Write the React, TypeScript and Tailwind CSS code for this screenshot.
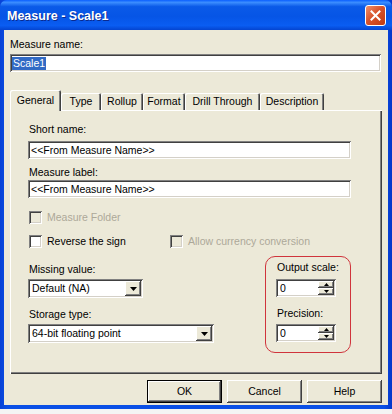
import React from "react";

const sunken =
  "bg-white shadow-[inset_1px_1px_0_#808080,inset_-1px_-1px_0_#ffffff,inset_2px_2px_0_#404040,inset_-2px_-2px_0_#d4d0c8]";
const raised =
  "bg-[#ece9d8] shadow-[inset_-1px_-1px_0_#404040,inset_1px_1px_0_#ffffff,inset_-2px_-2px_0_#808080,inset_2px_2px_0_#ece9d8]";

function DownArrow() {
  return (
    <svg width="7" height="4" viewBox="0 0 7 4">
      <path d="M0 0H7L3.5 4Z" fill="#000" />
    </svg>
  );
}

function Select({ value, w }: { value: string; w: string }) {
  return (
    <div className={`${sunken} ${w} h-[19px] flex items-center pl-[4px] pr-[2px]`}>
      <span className="flex-1 leading-[13px]">{value}</span>
      <div className={`${raised} w-[16px] h-[15px] flex items-center justify-center`}>
        <DownArrow />
      </div>
    </div>
  );
}

function Spin({ value }: { value: string }) {
  return (
    <div className={`${sunken} w-[60px] h-[18px] flex items-center pl-[4px] pr-[2px]`}>
      <span className="flex-1 leading-[13px]">{value}</span>
      <div className="flex flex-col h-[14px] w-[16px]">
        <div className={`${raised} h-[7px] flex items-center justify-center`}>
          <svg width="5" height="3" viewBox="0 0 5 3">
            <path d="M2.5 0L5 3H0Z" fill="#000" />
          </svg>
        </div>
        <div className={`${raised} h-[7px] flex items-center justify-center`}>
          <svg width="5" height="3" viewBox="0 0 5 3">
            <path d="M0 0H5L2.5 3Z" fill="#000" />
          </svg>
        </div>
      </div>
    </div>
  );
}

function Check({ label, disabled, className = "" }: { label: string; disabled?: boolean; className?: string }) {
  return (
    <div className={`flex items-center ${className}`}>
      <div
        className={`w-[13px] h-[13px] ${
          disabled ? "bg-[#ece9d8]" : "bg-white"
        } shadow-[inset_1px_1px_0_#808080,inset_-1px_-1px_0_#ffffff,inset_2px_2px_0_#404040,inset_-2px_-2px_0_#d4d0c8]`}
      />
      <span className={`ml-[5px] leading-[13px] ${disabled ? "text-[#aca899]" : "text-black"}`}>{label}</span>
    </div>
  );
}

function Tab({ label, w, active }: { label: string; w: string; active?: boolean }) {
  if (active) {
    return (
      <div
        className={`${w} h-[21px] mb-[-1px] relative z-10 bg-[#ece9d8] rounded-t-[2px] shadow-[inset_1px_1px_0_#ffffff,inset_-1px_0_0_#404040,inset_-2px_0_0_#808080] flex items-start justify-center pt-[4px] leading-[13px]`}
      >
        {label}
      </div>
    );
  }
  return (
    <div
      className={`${w} h-[17px] bg-[#ece9d8] rounded-t-[2px] shadow-[inset_1px_1px_0_#ffffff,inset_-1px_0_0_#404040,inset_-2px_0_0_#808080] flex items-start justify-center pt-[2px] leading-[13px]`}
    >
      {label}
    </div>
  );
}

function Button({ label, def }: { label: string; def?: boolean }) {
  if (def) {
    return (
      <div className="w-[75px] h-[23px] border border-black">
        <div className={`${raised} w-full h-full flex items-center justify-center leading-[13px]`}>{label}</div>
      </div>
    );
  }
  return <div className={`${raised} w-[75px] h-[23px] flex items-center justify-center leading-[13px]`}>{label}</div>;
}

export default function App() {
  return (
    <div className="w-[392px] h-[414px] bg-[#f4f4f4] font-['Liberation_Sans',Arial,sans-serif] text-[10.5px] text-black overflow-hidden">
      <div className="w-[392px] h-[409px] flex flex-col bg-[linear-gradient(90deg,#0842d6,#0a4fe6_2%,#0a4fe6_98%,#0435c8)]">
        {/* title bar */}
        <div className="h-[30px] shrink-0 flex items-center px-[7px] rounded-t-[7px] bg-[linear-gradient(180deg,#0a5fff_0%,#3b8dff_8%,#0a5ae8_22%,#0655e6_55%,#0a5df2_85%,#0444d0_100%)]">
          <span className="flex-1 text-white font-bold text-[12.5px] leading-[16px] mt-[1px] [text-shadow:1px_1px_0_#0a2a8f]">
            Measure - Scale1
          </span>
          <div className="w-[21px] h-[21px] mr-[-1px] rounded-[3px] border border-white bg-[linear-gradient(135deg,#f0906c,#d8532c_45%,#c13a12)] flex items-center justify-center">
            <svg width="11" height="11" viewBox="0 0 11 11">
              <path d="M1.5 1.5L9.5 9.5M9.5 1.5L1.5 9.5" stroke="#fff" strokeWidth="2" strokeLinecap="square" />
            </svg>
          </div>
        </div>

        {/* body */}
        <div className="flex-1 mx-[4px] mb-[4px] bg-[#ece9d8] px-[6px] flex flex-col">
          <div className="mt-[8px] leading-[13px]">Measure name:</div>
          <div className={`${sunken} mt-[3px] w-[371px] h-[18px] flex items-center pl-[2px]`}>
            <span className="bg-[#316ac5] text-white leading-[13px] px-[1px]">Scale1</span>
          </div>

          {/* tabs */}
          <div className="mt-[18px] h-[20px] flex items-end">
            <Tab label="General" w="w-[51px]" active />
            <Tab label="Type" w="w-[40px]" />
            <Tab label="Rollup" w="w-[42px]" />
            <Tab label="Format" w="w-[42px]" />
            <Tab label="Drill Through" w="w-[75px]" />
            <Tab label="Description" w="w-[64px]" />
          </div>

          {/* panel */}
          <div className="w-[372px] h-[264px] shadow-[inset_1px_1px_0_#ffffff,inset_-1px_-1px_0_#404040,inset_-2px_-2px_0_#808080] pl-[18px] pt-[13px] flex flex-col">
            <div className="ml-[1px] leading-[13px]">Short name:</div>
            <div className={`${sunken} mt-[5px] w-[323px] h-[18px] flex items-center pl-[3px] leading-[13px]`}>
              &lt;&lt;From Measure Name&gt;&gt;
            </div>
            <div className="ml-[1px] mt-[7px] leading-[13px]">Measure label:</div>
            <div className={`${sunken} mt-[1px] w-[323px] h-[18px] flex items-center pl-[3px] leading-[13px]`}>
              &lt;&lt;From Measure Name&gt;&gt;
            </div>
            <Check label="Measure Folder" disabled className="mt-[13px] ml-[1px]" />
            <div className="flex mt-[11px] ml-[1px]">
              <Check label="Reverse the sign" className="w-[141px]" />
              <Check label="Allow currency conversion" disabled />
            </div>

            <div className="flex mt-[8px]">
              <div className="flex flex-col w-[237px] mt-[7px]">
                <div className="ml-[1px] leading-[13px]">Missing value:</div>
                <div className="mt-[3px]">
                  <Select value="Default (NA)" w="w-[115px]" />
                </div>
                <div className="ml-[1px] mt-[10px] leading-[13px]">Storage type:</div>
                <div className="mt-[3px]">
                  <Select value="64-bit floating point" w="w-[186px]" />
                </div>
              </div>
              <div className="w-[86px] h-[97px] rounded-[10px] border border-[#d0343c] pl-[10px] pt-[4px] flex flex-col">
                <div className="ml-[1px] leading-[13px]">Output scale:</div>
                <div className="mt-[5px]">
                  <Spin value="0" />
                </div>
                <div className="ml-[1px] mt-[10px] leading-[13px]">Precision:</div>
                <div className="mt-[4px]">
                  <Spin value="0" />
                </div>
              </div>
            </div>
          </div>

          {/* buttons */}
          <div className="mt-[6px] flex justify-end gap-[5px]">
            <Button label="OK" def />
            <Button label="Cancel" />
            <Button label="Help" />
          </div>
        </div>
      </div>
    </div>
  );
}
